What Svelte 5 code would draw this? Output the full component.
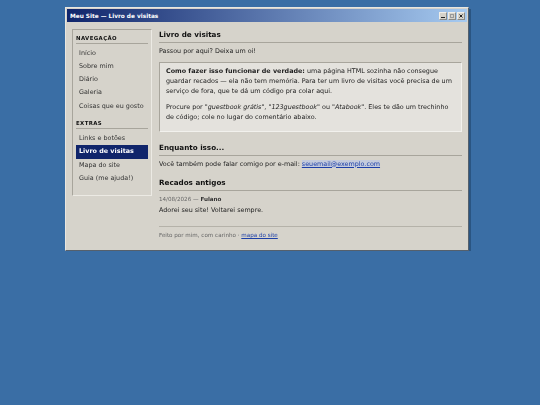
<script>
	const main = ['Início', 'Sobre mim', 'Diário', 'Galeria', 'Coisas que eu gosto'];
	const extras = [
		{ label: 'Links e botões' },
		{ label: 'Livro de visitas', active: true },
		{ label: 'Mapa do site' },
		{ label: 'Guia (me ajuda!)' }
	];
</script>

<div class="window">
	<div class="titlebar">
		<span class="title">Meu Site — Livro de visitas</span>
		<div class="controls">
			<span class="ctl"><svg width="6" height="6" viewBox="0 0 6 6"><rect x="1" y="4" width="4" height="1" fill="#222" /></svg></span>
			<span class="ctl"><svg width="6" height="6" viewBox="0 0 6 6"><rect x="1.5" y="1.5" width="3" height="3" fill="none" stroke="#999" /></svg></span>
			<span class="ctl"><svg width="6" height="6" viewBox="0 0 6 6"><path d="M1.5 1.5l3 3M4.5 1.5l-3 3" stroke="#222" /></svg></span>
		</div>
	</div>

	<div class="body">
		<aside class="sidebar">
			<h4>Navegação</h4>
			<ul>
				{#each main as item}
					<li>{item}</li>
				{/each}
			</ul>
			<h4 class="second">Extras</h4>
			<ul>
				{#each extras as item}
					<li class:active={item.active}>{item.label}</li>
				{/each}
			</ul>
		</aside>

		<main class="content">
			<h2>Livro de visitas</h2>
			<p>Passou por aqui? Deixa um oi!</p>

			<div class="note">
				<p><strong>Como fazer isso funcionar de verdade:</strong> uma página HTML sozinha não consegue guardar recados — ela não tem memória. Para ter um livro de visitas você precisa de um serviço de fora, que te dá um código pra colar aqui.</p>
				<p>Procure por <em>"guestbook grátis"</em>, <em>"123guestbook"</em> ou <em>"Atabook"</em>. Eles te dão um trechinho de código; cole no lugar do comentário abaixo.</p>
			</div>

			<h2>Enquanto isso...</h2>
			<p>Você também pode falar comigo por e-mail: <a class="mail" href="#top">seuemail@exemplo.com</a></p>

			<h2>Recados antigos</h2>
			<div class="meta">14/08/2026 — <b>Fulano</b></div>
			<p>Adorei seu site! Voltarei sempre.</p>

			<footer>Feito por mim, com carinho · <a href="#top">mapa do site</a></footer>
		</main>
	</div>
</div>

<style>
	:global(body) {
		margin: 0;
		background: #3a6ea5;
		font-family: "DejaVu Sans", Verdana, sans-serif;
	}

	.window {
		width: 400px;
		margin: 7px 0 0 65px;
		background: #d6d3cb;
		border: 1px solid;
		border-color: #e8e6e0 #55606c #55606c #e8e6e0;
		padding: 1px;
		box-shadow: 2px 2px 0 #2a5582;
		/* the reference is soft all over, and this also drops the coloured text fringes */
		filter: blur(0.3px);
	}

	.titlebar {
		height: 13px;
		display: flex;
		align-items: center;
		justify-content: space-between;
		padding: 0 2px 0 3px;
		background: linear-gradient(to right, #10256b, #a6caf0);
	}

	.title {
		color: #fff;
		font-size: 5.8px;
		font-weight: bold;
	}

	.controls {
		display: flex;
		gap: 1px;
	}

	.ctl {
		width: 8px;
		height: 8px;
		display: flex;
		background: #d6d3cb;
		border: 1px solid;
		border-color: #f0eee8 #8a8a86 #8a8a86 #f0eee8;
		box-sizing: border-box;
		align-items: center;
		justify-content: center;
		overflow: hidden;
	}

	.body {
		display: flex;
		gap: 7px;
		padding: 7px 5px 9px 5px;
	}

	.sidebar {
		width: 80px;
		flex: none;
		align-self: flex-start;
		box-sizing: border-box;
		padding: 4px 3px 9.5px;
		border: 1px solid;
		border-color: #a8a59c #eceae4 #eceae4 #a8a59c;
	}

	h4 {
		margin: 0 0 2.5px;
		padding-bottom: 1px;
		font-size: 5.4px;
		letter-spacing: 0.4px;
		text-transform: uppercase;
		line-height: 8px;
		color: #111;
		border-bottom: 1px solid #a8a59c;
	}

	h4.second {
		margin-top: 6px;
		margin-bottom: 3px;
	}

	ul {
		list-style: none;
		margin: 0;
		padding: 0;
	}

	li {
		height: 13.3px;
		line-height: 13.3px;
		padding-left: 3px;
		font-size: 6.4px;
		color: #333;
		white-space: nowrap;
	}

	li.active {
		background: #10256b;
		color: #fff;
		font-weight: bold;
	}

	.content {
		flex: 1;
		min-width: 0;
		padding-top: 0.5px;
		color: #222;
		font-size: 6.4px;
		line-height: 10px;
	}

	h2 {
		margin: 0 0 3px;
		padding-bottom: 2px;
		font-size: 7.2px;
		line-height: 10px;
		color: #111;
		border-bottom: 1px solid #a8a59c;
	}

	p {
		margin: 0;
	}

	.note {
		margin: 6.5px 0 10.5px;
		padding: 3px 6px 9px;
		background: #e4e2dd;
		border: 1px solid;
		border-color: #a8a59c #f2f1ed #f2f1ed #a8a59c;
	}

	.note p + p {
		margin-top: 6px;
	}

	.content > p + h2 {
		margin-top: 9.5px;
	}

	.mail {
		background: #c4cbdc;
	}

	a {
		color: #1c3fa8;
	}

	.meta {
		font-size: 5.6px;
		line-height: 11px;
		color: #666;
	}

	.meta b {
		color: #333;
	}

	footer {
		margin-top: 11px;
		padding-top: 3px;
		border-top: 1px solid #b5b2a9;
		font-size: 5.6px;
		line-height: 10px;
		color: #666;
	}
</style>
